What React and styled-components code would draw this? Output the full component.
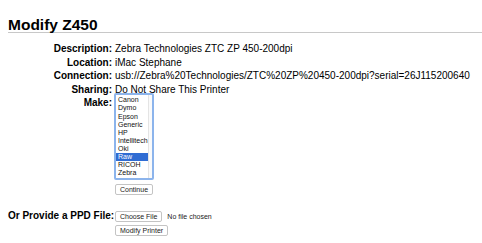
import React from "react";
import styled, { createGlobalStyle } from "styled-components";

const GlobalStyle = createGlobalStyle`
  html, body {
    margin: 0;
    padding: 0;
    background: #fff;
  }
  body {
    font-family: "Liberation Sans", Arial, sans-serif;
    color: #000;
  }
`;

const makes = ["Canon", "Dymo", "Epson", "Generic", "HP", "Intellitech", "Oki", "Raw", "RICOH", "Zebra"];

export default function App() {
  return (
    <>
      <GlobalStyle />
      <Page>
        <Title>Modify Z450</Title>
        <Form>
          <Label>Description:</Label>
          <Value>Zebra Technologies ZTC ZP 450-200dpi</Value>
          <Label>Location:</Label>
          <Value>iMac Stephane</Value>
          <Label>Connection:</Label>
          <Value>usb://Zebra%20Technologies/ZTC%20ZP%20450-200dpi?serial=26J115200640</Value>
          <Label>Sharing:</Label>
          <Value>Do Not Share This Printer</Value>
          <Label>Make:</Label>
          <Stack>
            <ListBox>
              <Options>
                {makes.map((m) => (
                  <Option key={m} $selected={m === "Raw"}>
                    {m}
                  </Option>
                ))}
              </Options>
              <Track />
            </ListBox>
            <Button>Continue</Button>
          </Stack>
          <Label $spaced>Or Provide a PPD File:</Label>
          <Stack $spaced>
            <FileRow>
              <Button>Choose File</Button>
              <FileName>No file chosen</FileName>
            </FileRow>
            <Button>Modify Printer</Button>
          </Stack>
        </Form>
      </Page>
    </>
  );
}

const Page = styled.div`
  padding: 17px 0 0 8px;
`;

const Title = styled.h2`
  margin: 0;
  padding: 0;
  font-family: "Liberation Sans", Arial, sans-serif;
  font-size: 15.5px;
  line-height: 15px;
  font-weight: bold;
  border-bottom: 1px solid #c8c8c8;
`;

const Form = styled.div`
  display: grid;
  grid-template-columns: 104px 1fr;
  column-gap: 3px;
  margin-top: 9px;
  font-size: 10px;
  line-height: 13.6px;
`;

const Label = styled.div`
  text-align: right;
  font-weight: bold;
  white-space: nowrap;
  margin-top: ${(p) => (p.$spaced ? "14px" : "0")};
`;

const Value = styled.div`
  white-space: nowrap;
`;

const Stack = styled.div`
  display: flex;
  flex-direction: column;
  align-items: flex-start;
  gap: ${(p) => (p.$spaced ? "3px" : "4px")};
  margin-top: ${(p) => (p.$spaced ? "16px" : "-3px")};
`;

const ListBox = styled.div`
  display: flex;
  width: 36px;
  height: 83px;
  border: 2px solid #8cb4ec;
  border-radius: 2px;
  background: #fff;
  box-sizing: content-box;
  margin-left: -1px;
`;

const Options = styled.div`
  flex: 1;
  display: flex;
  flex-direction: column;
  padding-top: 1px;
`;

const Option = styled.div`
  font-size: 7px;
  line-height: 8.1px;
  padding-left: 2px;
  color: ${(p) => (p.$selected ? "#fff" : "#111")};
  background: ${(p) => (p.$selected ? "#2f6cd3" : "transparent")};
`;

const Track = styled.div`
  width: 5px;
  border-left: 1px solid #e4e4e4;
  background: #fafafa;
`;

const Button = styled.div`
  font-size: 7px;
  line-height: 9px;
  padding: 0 4px;
  border: 1px solid #c4c4c4;
  border-radius: 2px;
  background: #fff;
  color: #222;
  white-space: nowrap;
`;

const FileRow = styled.div`
  display: flex;
  align-items: center;
  gap: 5px;
`;

const FileName = styled.span`
  font-size: 7px;
  line-height: 9px;
  color: #222;
`;
